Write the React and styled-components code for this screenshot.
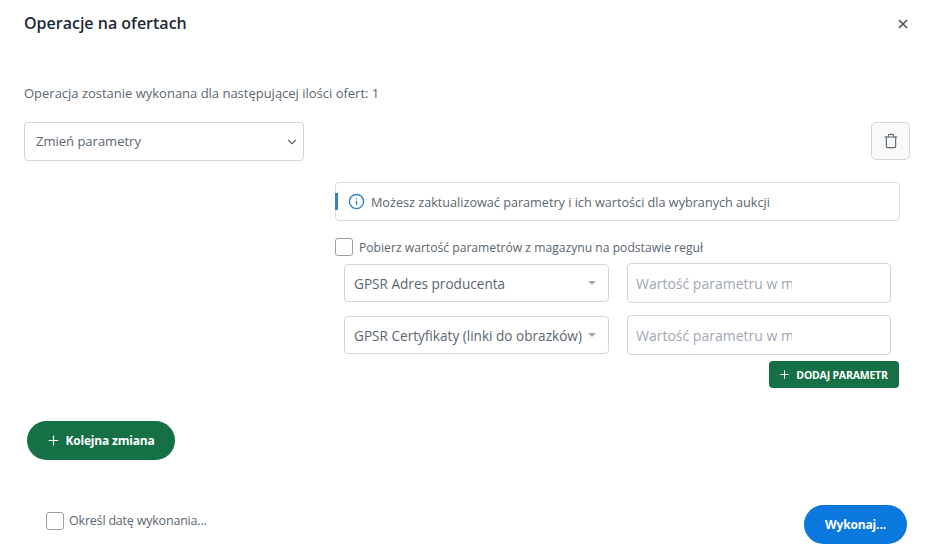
import React from 'react';
import styled, { createGlobalStyle } from 'styled-components';
import { Plus, Trash, Info, X, ChevronDown } from 'lucide-react';

const params = [
  { id: 'address', name: 'GPSR Adres producenta' },
  { id: 'certs', name: 'GPSR Certyfikaty (linki do obrazków)' },
];

export default function App() {
  return (
    <Modal>
      <GlobalStyle />
      <Header>
        <Title>Operacje na ofertach</Title>
        <CloseButton type="button" aria-label="Zamknij">
          <X size={14} strokeWidth={3} />
        </CloseButton>
      </Header>
      <Intro>Operacja zostanie wykonana dla następującej ilości ofert: 1</Intro>
      <OperationRow>
        <OperationSelect>
          <span>Zmień parametry</span>
          <ChevronDown size={14} strokeWidth={1.9} />
        </OperationSelect>
        <TrashButton type="button" aria-label="Usuń">
          <Trash size={16} strokeWidth={1.7} />
        </TrashButton>
      </OperationRow>
      <Panel>
        <InfoBox>
          <Info size={17} strokeWidth={2} color="#2f86c5" />
          <span>Możesz zaktualizować parametry i ich wartości dla wybranych aukcji</span>
        </InfoBox>
        <CheckLabel>
          <Checkbox type="checkbox" />
          <span>Pobierz wartość parametrów z magazynu na podstawie reguł</span>
        </CheckLabel>
        {params.map((param) => (
          <ParamRow key={param.id}>
            <ParamSelect>
              <span>{param.name}</span>
              <Caret />
            </ParamSelect>
            <ParamInput placeholder="Wartość parametru w magazynie" />
          </ParamRow>
        ))}
        <AddRow>
          <AddButton type="button">
            <Plus size={13} strokeWidth={1.8} />
            DODAJ PARAMETR
          </AddButton>
        </AddRow>
      </Panel>
      <NextButton type="button">
        <Plus size={15} strokeWidth={1.8} />
        Kolejna zmiana
      </NextButton>
      <Footer>
        <DateLabel>
          <Checkbox type="checkbox" />
          <span>Określ datę wykonania...</span>
        </DateLabel>
        <RunButton type="button">Wykonaj...</RunButton>
      </Footer>
    </Modal>
  );
}

const GlobalStyle = createGlobalStyle`
  html, body {
    margin: 0;
    background: #fff;
  }
  * {
    box-sizing: border-box;
  }
  body, button, input {
    font-family: "Open Sans", "Liberation Sans", sans-serif;
  }
`;

const Modal = styled.div`
  width: 928px;
  height: 551px;
  display: flex;
  flex-direction: column;
  color: #4f5b67;
  overflow: hidden;
`;

const Header = styled.div`
  height: 46px;
  padding: 0 17px 0 24px;
  display: flex;
  justify-content: space-between;
  align-items: center;
`;

const Title = styled.h1`
  margin: 0;
  font-size: 16px;
  font-weight: 600;
  color: #212b36;
`;

const CloseButton = styled.button`
  width: 16px;
  height: 16px;
  margin-top: 2px;
  padding: 0;
  border: none;
  background: none;
  color: #4f5b67;
  display: flex;
  align-items: center;
  justify-content: center;
`;

const Intro = styled.p`
  margin: 38px 0 0 24px;
  height: 18px;
  line-height: 19px;
  font-size: 13px;
  letter-spacing: -0.01px;
  color: #5b6670;
`;

const OperationRow = styled.div`
  margin-top: 20px;
  padding: 0 18px 0 24px;
  display: flex;
  justify-content: space-between;
  align-items: flex-start;
`;

const OperationSelect = styled.div`
  width: 280px;
  height: 39px;
  padding: 0 4px 0 11px;
  border: 1px solid #d3d6de;
  border-radius: 4px;
  display: flex;
  align-items: center;
  justify-content: space-between;
  font-size: 13px;
  color: #5b6670;

  span {
    margin-bottom: 2px;
  }
`;

const TrashButton = styled.button`
  width: 39px;
  height: 38px;
  padding: 0;
  border: 1px solid #d3d6de;
  border-radius: 5px;
  background: #f9f9fa;
  color: #5b6670;
  display: flex;
  align-items: center;
  justify-content: center;
`;

const Panel = styled.div`
  margin: 21px 0 0 335px;
  width: 565px;
`;

const InfoBox = styled.div`
  position: relative;
  height: 39px;
  padding: 0 0 0 12px;
  border: 1px solid #d8dbe1;
  border-radius: 4px;
  display: flex;
  align-items: center;
  gap: 6px;
  font-size: 12.65px;
  color: #5b6670;

  &::before {
    content: '';
    position: absolute;
    left: -1px;
    top: 10px;
    width: 3px;
    height: 17px;
    background: #2f86c5;
  }
`;

const CheckLabel = styled.label`
  margin-top: 17px;
  display: flex;
  align-items: center;
  gap: 6px;
  font-size: 12.15px;
  color: #5b6670;
`;

const Checkbox = styled.input`
  appearance: none;
  margin: 0;
  width: 18px;
  height: 18px;
  flex: none;
  border: 1px solid #9aa1ab;
  border-radius: 3px;
  background: #fff;
`;

const ParamRow = styled.div`
  margin: 7px 0 0 9px;
  height: 40px;
  display: flex;
  gap: 18px;
  & + & {
    margin-top: 12px;
  }
`;

const ParamSelect = styled.div`
  width: 265px;
  height: 38px;
  margin-top: 1px;
  padding: 0 12px 0 9px;
  border: 1px solid #d3d6de;
  border-radius: 4px;
  display: flex;
  align-items: center;
  justify-content: space-between;
  font-size: 13.6px;
  color: #5b6670;
  white-space: nowrap;
`;

const Caret = styled.i`
  width: 0;
  height: 0;
  border-left: 4px solid transparent;
  border-right: 4px solid transparent;
  border-top: 4px solid #a3a8af;
`;

const ParamInput = styled.input`
  width: 264px;
  height: 40px;
  padding: 0 98px 0 8px;
  border: 1px solid #d3d6de;
  border-radius: 4px;
  font-size: 14px;
  color: #5b6670;
  outline: none;

  &::placeholder {
    color: #a2a8b3;
    opacity: 1;
  }
`;

const AddRow = styled.div`
  margin-top: 6px;
  display: flex;
  justify-content: flex-end;
  padding-right: 1px;
`;

const AddButton = styled.button`
  width: 130px;
  height: 27px;
  padding: 0 2px 0 0;
  border: none;
  border-radius: 4px;
  background: #157046;
  color: #fff;
  display: flex;
  align-items: center;
  justify-content: center;
  gap: 5px;
  font-size: 10.5px;
  font-weight: 700;
  letter-spacing: -0.2px;
`;

const NextButton = styled.button`
  margin: 33px 0 0 27px;
  width: 148px;
  height: 39px;
  padding: 0 2px 0 0;
  border: none;
  border-radius: 20px;
  background: #157046;
  color: #fff;
  display: flex;
  align-items: center;
  justify-content: center;
  gap: 5px;
  font-size: 12px;
  font-weight: 700;
  letter-spacing: -0.2px;
`;

const Footer = styled.div`
  margin-top: 45px;
  padding: 0 21px 0 46px;
  display: flex;
  justify-content: space-between;
  align-items: center;
`;

const DateLabel = styled.label`
  display: flex;
  align-items: center;
  gap: 5px;
  margin-top: -8px;
  font-size: 12.5px;
  letter-spacing: -0.2px;
  color: #5b6670;
`;

const RunButton = styled.button`
  width: 103px;
  height: 39px;
  padding: 0;
  border: none;
  border-radius: 20px;
  background: #0a78dc;
  color: #fff;
  font-size: 12px;
  font-weight: 700;
  letter-spacing: -0.15px;
`;
